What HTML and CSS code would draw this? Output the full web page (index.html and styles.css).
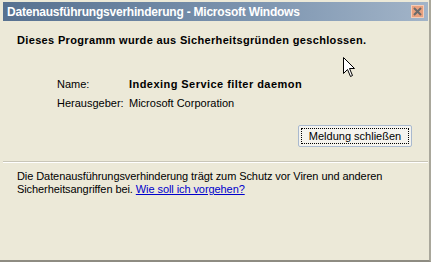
FILE: index.html
```html
<!DOCTYPE html>
<html>
<head>
<meta charset="utf-8">
<link rel="stylesheet" href="styles.css">
</head>
<body>
<div class="window">
  <div class="titlebar">
    <span class="title">Datenausführungsverhinderung - Microsoft Windows</span>
    <span class="close"><svg width="9" height="9" viewBox="0 0 9 9"><path d="M1 1 L8 8 M8 1 L1 8" stroke="#6b6b6b" stroke-width="2"/></svg></span>
  </div>
  <div class="content">
    <p class="headline">Dieses Programm wurde aus Sicherheitsgründen geschlossen.</p>
    <div class="details">
      <div class="row"><span class="label">Name:</span><span class="value strong">Indexing Service filter daemon</span></div>
      <div class="row"><span class="label">Herausgeber:</span><span class="value">Microsoft Corporation</span></div>
    </div>
    <div class="actions">
      <button class="btn"><span class="focus">Meldung schließen</span></button>
    </div>
  </div>
  <div class="separator"></div>
  <p class="info">Die Datenausführungsverhinderung trägt zum Schutz vor Viren und anderen<br>Sicherheitsangriffen bei. <a href="#" class="link">Wie soll ich vorgehen?</a></p>
  <svg class="cursor" width="12" height="20" viewBox="0 0 12 20"><path d="M0.5 0.5 L0.5 16.5 L4.5 12.5 L7.5 19.5 L9.5 18.5 L6.5 11.5 L11.5 11.5 Z" fill="#fff" stroke="#000" stroke-width="1"/></svg>
</div>
</body>
</html>
```
FILE: styles.css
```css
html, body { margin: 0; padding: 0; }
body { width: 431px; height: 262px; overflow: hidden; }
.window {
  position: relative;
  width: 431px; height: 262px; box-sizing: border-box;
  background: #ece9d8;
  border-right: 2px solid #a9a79b;
  border-bottom: 2px solid #8e8c82;
  padding: 2px 0 0 3px;
  font-family: "Liberation Sans", Arial, sans-serif;
  font-size: 11px;
  color: #000;
}
.titlebar {
  width: 425px; height: 19px;
  display: flex; align-items: center; justify-content: space-between;
  background: linear-gradient(to right, #577190, #7d95b0 60%, #a2b4c8);
  box-sizing: border-box; padding: 0 4px 0 4px;
}
.title { color: #fff; font-weight: bold; font-size: 12px; letter-spacing: -0.22px; }
.close {
  width: 13px; height: 13px; box-sizing: border-box;
  background: #e8a07e; border: 1px solid #f6cdb6;
  display: flex; align-items: center; justify-content: center;
}
.close svg { display: block; }
.content { padding: 0 0 0 14px; }
.headline { margin: 13px 0 0 0; font-weight: bold; font-size: 11px; letter-spacing: 0.34px; line-height: 13px; }
.details { margin: 30px 0 0 40px; display: flex; flex-direction: column; gap: 6px; }
.row { display: flex; height: 13px; align-items: center; }
.label { width: 72px; }
.strong { font-weight: bold; letter-spacing: 0.45px; }
.actions { display: flex; justify-content: flex-end; padding-right: 17px; margin-top: 16px; }
.btn {
  width: 114px; height: 22px; padding: 2px;
  background: #f4f3ee; border: 1px solid #a9b9cf; border-radius: 2px;
  font: inherit; color: #000;
  display: flex;
}
.focus { flex: 1; border: 1px dotted #000; display: flex; align-items: center; justify-content: center; }
.separator { margin: 14px 0 0 0; width: 425px; height: 1px; background: #c9c6b8; border-bottom: 1px solid #fff; }
.info { margin: 7px 0 0 14px; line-height: 13px; letter-spacing: -0.08px; }
.link { color: #0000cc; }
.cursor { position: absolute; left: 343px; top: 57px; }
```
